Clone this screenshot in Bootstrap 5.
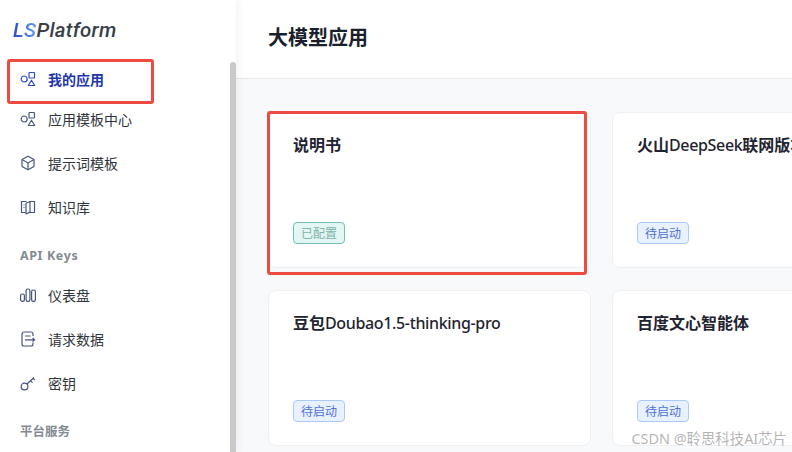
<!DOCTYPE html>
<html lang="zh-CN">

<head>
  <meta charset="UTF-8">
  <title>大模型应用</title>
  <link href="https://cdn.jsdelivr.net/npm/bootstrap@5.3.3/dist/css/bootstrap.min.css" rel="stylesheet">
  <style>
    html, body { height: 452px; overflow: hidden; }
    body { font-family: "Noto Sans", "Noto Sans CJK SC", sans-serif; background: #f8f9fb; color: #1f2430; }

    .side-panel { width: 236px; height: 452px; background: #fff; box-shadow: 0 0 10px rgba(30, 40, 70, .09); z-index: 2; }
    .side-logo { padding: 17px 0 0 13px; height: 57px; font-family: Roboto, sans-serif; font-style: italic; font-weight: 500; font-size: 20.5px; line-height: 26px; letter-spacing: .3px; color: #3a3f4a; }
    .side-logo span { background: linear-gradient(90deg, #2a48c4, #5f9cf2); -webkit-background-clip: text; background-clip: text; color: transparent; }
    .side-link { height: 44px; padding: 0 0 0 20px; gap: 12px; font-size: 14px; color: #30343c; }
    .side-link svg { width: 16px; height: 16px; fill: none; stroke: #46557e; stroke-width: 1.2; flex-shrink: 0; }
    .side-link.is-active { color: #1f37ad; font-weight: 700; margin-bottom: -4px; }
    .side-link.is-active svg { stroke: #2c4ac8; }
    .side-head { padding: 10px 0 0 20px; height: 44px; font-size: 12.5px; font-weight: 700; color: #858a92; }
    .side-head-api { letter-spacing: .6px; }
    .side-thumb { top: 62px; right: 0; bottom: 0; width: 6px; background: #c9c9c9; border-radius: 3px 3px 0 0; }

    .page-head { height: 79px; background: #fff; border-bottom: 1px solid #e6e8ec; padding-left: 32px; }
    .page-head h1 { font-size: 20px; font-weight: 700; color: #1a1f2c; margin: 0 0 2px; }
    .app-grid { grid-template-columns: 323px 323px; gap: 22px 21px; padding: 33px 0 0 32px; }
    .app-card { height: 156px; border: 1px solid #eef0f3; border-radius: 8px; }
    .app-card .card-body { padding: 20px 24px 23px; }
    .app-title { font-size: 16px; line-height: 24px; font-weight: 500; letter-spacing: -.35px; color: #1f2430; white-space: nowrap; margin: 0; }
    .app-title b { font-weight: 700; letter-spacing: 0; }
    .state-tag { width: 52px; height: 22px; padding: 0; font-size: 12px; font-weight: 400; line-height: 21px; border-radius: 4px; border: 1px solid; }
    .state-on { background: #e4f6f3; border-color: #6fc0b5; color: #7fb5aa; }
    .state-off { background: #e8f1ff; border-color: #a9caf7; color: #4f6fd6; }

    .mark-box { border: 3px solid #ee4b40; border-radius: 3px; z-index: 5; pointer-events: none; }
    .mark-menu { left: 7px; top: 59px; width: 147px; height: 45px; }
    .mark-card { left: 267px; top: 111px; width: 320px; height: 164px; }
    .wm-text { right: 5px; bottom: 5px; font-size: 14.4px; line-height: 16px; color: rgba(130, 130, 130, .6); z-index: 6; }
  </style>
</head>

<body class="position-relative">
  <div class="d-flex">
    <aside class="side-panel position-relative flex-shrink-0">
      <div class="side-logo"><span>LS</span>Platform</div>
      <nav class="nav flex-column">
        <a class="nav-link side-link is-active d-flex align-items-center" href="#">
          <svg viewBox="0 0 16 16"><circle cx="4.200" cy="8" r="3"/><rect x="9" y="1.500" width="5.500" height="5.500" rx=".8"/><path d="M11.500 9.200l3.200 5.300H8.300z" stroke-linejoin="round"/></svg>
          我的应用
        </a>
        <a class="nav-link side-link d-flex align-items-center" href="#">
          <svg viewBox="0 0 16 16"><circle cx="4.200" cy="8" r="3"/><rect x="9" y="1.500" width="5.500" height="5.500" rx=".8"/><path d="M11.500 9.200l3.200 5.300H8.300z" stroke-linejoin="round"/></svg>
          应用模板中心
        </a>
        <a class="nav-link side-link d-flex align-items-center" href="#">
          <svg viewBox="0 0 16 16"><path d="M8 1.200l6 3.300v7L8 14.800l-6-3.300v-7z" stroke-linejoin="round"/><path d="M2 4.500l6 3.400 6-3.400M8 7.900v6.900"/></svg>
          提示词模板
        </a>
        <a class="nav-link side-link d-flex align-items-center" href="#">
          <svg viewBox="0 0 16 16"><path d="M6.500 2.500H1.500v11h4M10 2.500h4.500v11H8"/><path d="M6 15V4.200L10 2.500v10.800L6 15z" stroke-linejoin="round"/><path d="M3.500 6h1M3.500 8.500h1"/></svg>
          知识库
        </a>
        <div class="side-head side-head-api d-flex align-items-center">API Keys</div>
        <a class="nav-link side-link d-flex align-items-center" href="#">
          <svg viewBox="0 0 16 16"><rect x=".6" y="7" width="3.800" height="7.400" rx="1.700"/><rect x="6.100" y="2" width="3.800" height="12.400" rx="1.700"/><rect x="11.600" y="3" width="3.800" height="11.400" rx="1.700"/></svg>
          仪表盘
        </a>
        <a class="nav-link side-link d-flex align-items-center" href="#">
          <svg viewBox="0 0 16 16"><path d="M13 5V3a2 2 0 0 0-2-2H4a2 2 0 0 0-2 2v10a2 2 0 0 0 2 2h7a2 2 0 0 0 2-2v-1.500"/><path d="M5 5h5.500M5 8.800h9.500M12.600 7l2 1.800-2 1.800"/></svg>
          请求数据
        </a>
        <a class="nav-link side-link d-flex align-items-center" href="#">
          <svg viewBox="0 0 16 16"><circle cx="4.500" cy="11.500" r="3.400"/><path d="M7 9l7-6.500M10.500 5.700l2 2M13 3.400l1.800 1.800"/></svg>
          密钥
        </a>
        <div class="side-head d-flex align-items-center">平台服务</div>
      </nav>
      <div class="side-thumb position-absolute"></div>
    </aside>

    <main class="flex-grow-1 overflow-hidden">
      <header class="page-head d-flex align-items-center">
        <h1>大模型应用</h1>
      </header>
      <div class="app-grid d-grid">
        <div class="card app-card">
          <div class="card-body d-flex flex-column justify-content-between align-items-start">
            <h2 class="app-title"><b>说明书</b></h2>
            <span class="badge state-tag state-on">已配置</span>
          </div>
        </div>
        <div class="card app-card">
          <div class="card-body d-flex flex-column justify-content-between align-items-start">
            <h2 class="app-title"><b>火山</b>DeepSeek<b>联网版本</b></h2>
            <span class="badge state-tag state-off">待启动</span>
          </div>
        </div>
        <div class="card app-card">
          <div class="card-body d-flex flex-column justify-content-between align-items-start">
            <h2 class="app-title"><b>豆包</b>Doubao1.5-thinking-pro</h2>
            <span class="badge state-tag state-off">待启动</span>
          </div>
        </div>
        <div class="card app-card">
          <div class="card-body d-flex flex-column justify-content-between align-items-start">
            <h2 class="app-title"><b>百度文心智能体</b></h2>
            <span class="badge state-tag state-off">待启动</span>
          </div>
        </div>
      </div>
    </main>
  </div>

  <div class="mark-box mark-menu position-absolute"></div>
  <div class="mark-box mark-card position-absolute"></div>
  <div class="wm-text position-absolute">CSDN @聆思科技AI芯片</div>

  <script src="https://cdn.jsdelivr.net/npm/bootstrap@5.3.3/dist/js/bootstrap.bundle.min.js"></script>
</body>

</html>
